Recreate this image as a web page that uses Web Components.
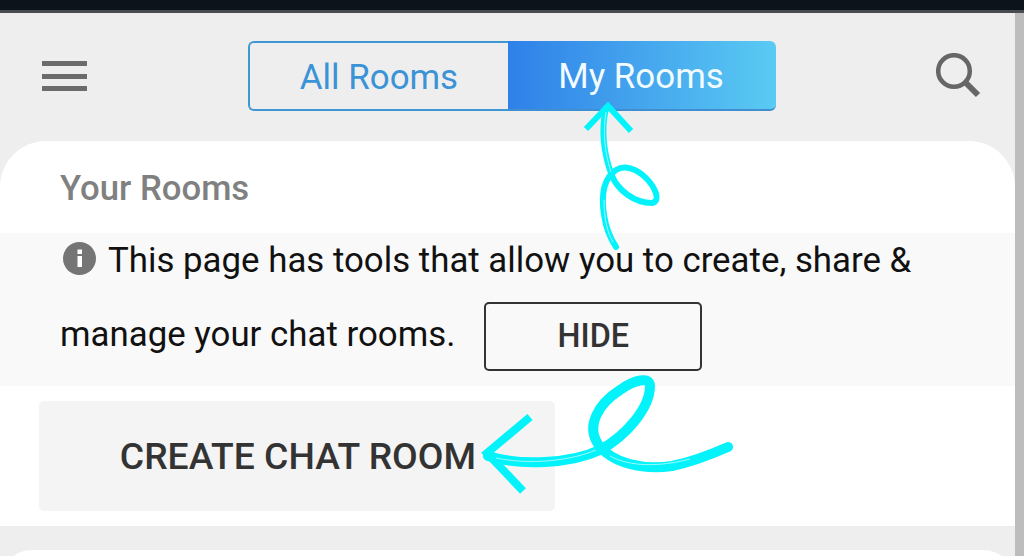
<!DOCTYPE html>
<html>
<head>
<meta charset="utf-8">
<title>Rooms</title>
<style>
  html, body { margin: 0; height: 100%; overflow: hidden; }
  body { background: #eeeeee; font-family: Roboto, "Liberation Sans", sans-serif; }
</style>
</head>
<body>
<rooms-page>
  <rooms-nav slot="nav"></rooms-nav>
  <rooms-card>
    <info-band>
      <span slot="first">This page has tools that allow you to create, share &amp;</span>
      <span slot="second">manage your chat rooms.</span>
    </info-band>
    <create-button>CREATE CHAT ROOM</create-button>
  </rooms-card>
</rooms-page>
<hand-arrows></hand-arrows>

<script>
// @ts-check
class RoomsPage extends HTMLElement {
    constructor() {
        super();
        this._root = this.attachShadow({ mode: "open" });
        this._root.innerHTML = `
        <style>
          :host { display: block; height: 556px; overflow: hidden; position: relative; }
          .status { height: 10px; background: #0d131a; border-bottom: 3px solid #474c52; }
          .body { display: flex; height: 543px; }
          .main { flex: 1; min-width: 0; display: flex; flex-direction: column; }
          .bar { width: 9px; background: #bdbdbd; }
          .next { flex: none; height: 40px; margin-top: 24px; background: #fff; border-radius: 32px 32px 0 0; }
        </style>
        <div class="status"></div>
        <div class="body">
          <div class="main">
            <slot name="nav"></slot>
            <slot></slot>
            <div class="next"></div>
          </div>
          <div class="bar"></div>
        </div>
        `;
    }
}

class RoomsNav extends HTMLElement {
    constructor() {
        super();
        this._root = this.attachShadow({ mode: "open" });
        this._root.innerHTML = `
        <style>
          :host { flex: none; display: flex; height: 128px; box-sizing: border-box; padding: 28px 34px 0 42px; align-items: flex-start; justify-content: space-between; }
          .menu { width: 45px; height: 30px; margin-top: 20px; display: flex; flex-direction: column; justify-content: space-between; }
          .menu i { display: block; height: 5px; background: #6b6b6b; }
          .tabs { display: flex; width: 528px; height: 70px; margin-left: 1px; box-sizing: border-box; font-size: 34.9px; }
          .tab { display: flex; align-items: center; justify-content: center; box-sizing: border-box; height: 70px; padding-top: 2px; }
          .all { width: 260px; color: #3a93d6; border: 2px solid #3f97d4; border-right: 0; border-radius: 6px 0 0 6px; }
          .mine { width: 268px; padding-right: 2px; color: #f2fbff; border-radius: 0 6px 6px 0; background: linear-gradient(90deg, #2f80e8, #5acbf3); border-bottom: 2px solid #3f8fd0; }
          svg { display: block; margin-top: 12px; }
        </style>
        <div class="menu"><i></i><i></i><i></i></div>
        <div class="tabs">
          <div class="tab all">All Rooms</div>
          <div class="tab mine">My Rooms</div>
        </div>
        <svg width="45" height="45" viewBox="0 0 45 45" fill="none" stroke="#666">
          <circle cx="18" cy="18" r="15.8" stroke-width="4.5"/>
          <path d="M29 29 L42 42" stroke-width="6"/>
        </svg>
        `;
    }
}

class RoomsCard extends HTMLElement {
    constructor() {
        super();
        this._root = this.attachShadow({ mode: "open" });
        this._root.innerHTML = `
        <style>
          :host { flex: none; display: block; height: 385px; background: #fff; border-radius: 46px 46px 0 0; }
          h2 { margin: 0; height: 92px; box-sizing: border-box; padding: 27px 0 0 60px; font-size: 34.7px; line-height: 40px; font-weight: 500; color: #808080; }
        </style>
        <h2>Your Rooms</h2>
        <slot></slot>
        `;
    }
}

class InfoBand extends HTMLElement {
    constructor() {
        super();
        this._root = this.attachShadow({ mode: "open" });
        this._root.innerHTML = `
        <style>
          :host { display: flex; flex-direction: column; height: 153px; box-sizing: border-box; padding: 0 60px; background: #f9f9f9; color: #111; font-size: 34.85px; }
          .row { flex: none; display: flex; align-items: center; height: 74px; white-space: nowrap; }
          .first { margin-top: -10px; }
          svg { flex: none; margin: -4px 12px 0 3px; }
          button { flex: none; align-self: flex-end; font: 500 32.4px Roboto, sans-serif; color: #333; background: transparent; width: 218px; height: 69px; padding: 0 0 2px; margin-left: 29px; border: 2px solid #333; border-radius: 5px; }
        </style>
        <div class="row first">
          <svg width="33" height="33" viewBox="0 0 33 33"><circle cx="16.5" cy="16.5" r="16.5" fill="#757575"/><rect x="14.5" y="14" width="4.5" height="11" fill="#fff"/><rect x="14.5" y="7.5" width="4.5" height="4.5" fill="#fff"/></svg>
          <slot name="first"></slot>
        </div>
        <div class="row second">
          <slot name="second"></slot>
          <button>HIDE</button>
        </div>
        `;
    }
}

class CreateButton extends HTMLElement {
    constructor() {
        super();
        this._root = this.attachShadow({ mode: "open" });
        this._root.innerHTML = `
        <style>
          :host { display: flex; align-items: center; justify-content: flex-end; box-sizing: border-box; width: 516px; height: 110px; margin: 15px 0 0 39px; padding-right: 79px; border-radius: 5px; background: #f4f4f4; color: #333; font-size: 37.25px; font-weight: 500; white-space: nowrap; }
        </style>
        <slot></slot>
        `;
    }
}

class HandArrows extends HTMLElement {
    constructor() {
        super();
        this._root = this.attachShadow({ mode: "open" });
        this._root.innerHTML = `
        <style>
          :host { display: block; position: absolute; left: 0; top: 0; width: 1024px; height: 556px; pointer-events: none; }
          path { fill: none; stroke: #04f3fb; stroke-linecap: butt; stroke-linejoin: miter; }
          .round { stroke-linecap: round; stroke-linejoin: round; }
          .line { stroke: #9ff8fc; stroke-width: 1; }
        </style>
        <svg width="1024" height="556" viewBox="0 0 1024 556">
          <!-- up arrow, to My Rooms -->
          <path stroke-width="6" d="M586 129 L608 106 L631 131"/>
          <path class="round" stroke-width="6" d="M606 108 C601 130 603 152 612 176 C618 190 634 203 652 203 C662 201 654 186 646 178 C636 168 624 165 616 170 C604 178 601 195 604 215 C606 228 610 238 616 247"/>
          <path class="line" d="M606 112 C603 132 604 150 611 172 M604 200 C604 220 608 234 613 242"/>
          <!-- left arrow, to Create Chat Room -->
          <path stroke-width="8" d="M530 417 L487 453 L523 491"/>
          <path class="round" stroke-width="10" d="M488 456 C520 466 570 464 600 450 C626 436 650 408 650 386 C650 376 634 380 620 390 C598 404 586 426 598 444 C612 464 644 470 672 466 C692 462 712 454 728 447"/>
          <path class="line" d="M496 458 C530 465 570 461 596 450 M610 456 C630 467 660 467 690 459"/>
        </svg>
        `;
    }
}

window.customElements.define("rooms-page", RoomsPage);
window.customElements.define("rooms-nav", RoomsNav);
window.customElements.define("rooms-card", RoomsCard);
window.customElements.define("info-band", InfoBand);
window.customElements.define("create-button", CreateButton);
window.customElements.define("hand-arrows", HandArrows);
</script>
</body>
</html>
